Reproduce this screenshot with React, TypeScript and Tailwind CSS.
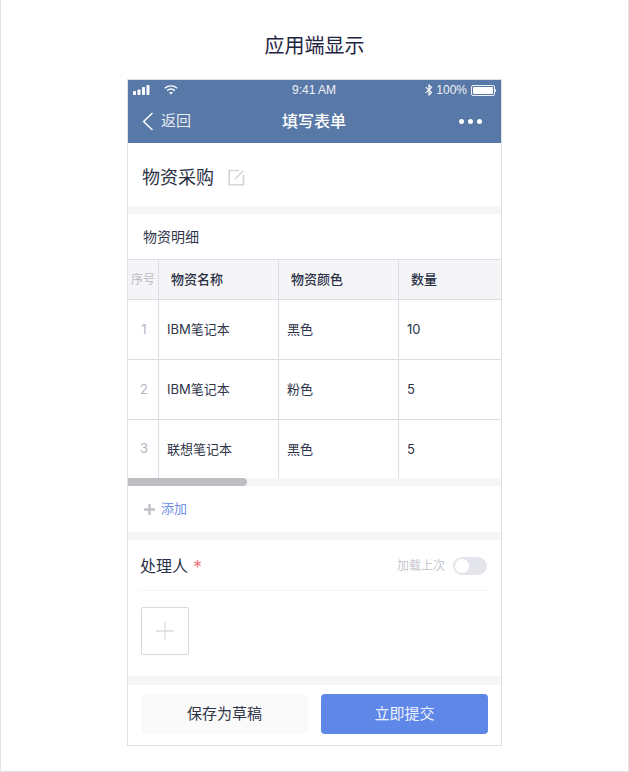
import React from "react";

const cn = "font-['Inter','Noto_Sans_CJK_SC',sans-serif]";

function StatusBar() {
  return (
    <div className="h-5 flex items-center justify-between pl-[5px] pr-[5px] text-[12px] text-white/90 relative font-['Liberation_Sans',sans-serif]">
      <div className="flex items-center gap-[13px]">
        <svg width="18" height="10" viewBox="0 0 18 10" fill="#fff">
          <rect x="0" y="6" width="3" height="4" rx="0.8" />
          <rect x="4.5" y="4.5" width="3" height="5.5" rx="0.8" />
          <rect x="9" y="2" width="3" height="8" rx="0.8" />
          <rect x="13.5" y="0" width="3" height="10" rx="0.8" />
        </svg>
        <svg width="14" height="10" viewBox="0 0 14 10" fill="none" stroke="#fff" strokeWidth="1.4">
          <path d="M0.8 3.3C4.5 0.2 9.5 0.2 13.2 3.3" />
          <path d="M3.2 5.6C5.4 3.7 8.6 3.7 10.8 5.6" />
          <path d="M7 9.6 5 7.6C6.2 6.7 7.8 6.7 9 7.6Z" fill="#fff" stroke="none" />
        </svg>
      </div>
      <span className="absolute left-[164px] top-0 leading-5">9:41 AM</span>
      <div className="flex items-center gap-[3px]">
        <svg width="8" height="12" viewBox="0 0 8 12" fill="none" stroke="#fff" strokeWidth="1.1">
          <path d="M0.8 3.2 6.6 8.4 4 11V1L6.6 3.6 0.8 8.8" />
        </svg>
        <span>100%</span>
        <div className="flex items-center ml-[1px]">
          <div className="w-[24px] h-[11px] rounded-[2px] border border-white/90 p-[1px]">
            <div className="w-full h-full bg-white rounded-[1px]" />
          </div>
          <div className="w-[1px] h-[3px] bg-white/70" />
        </div>
      </div>
    </div>
  );
}

function NavBar() {
  return (
    <div className="h-[43px] flex items-center justify-between relative pl-[14px] pr-[19px] pb-[1px]">
      <div className="flex items-center gap-[7px]">
        <svg width="12" height="19" viewBox="0 0 12 19" fill="none" stroke="#fff" strokeWidth="1.5">
          <path d="M10.5 1 1.6 9.5 10.5 18" />
        </svg>
        <span className="text-[15px] text-white/85">返回</span>
      </div>
      <span className="absolute left-0 right-[1px] text-center text-[16px] font-medium text-white pb-[1px]">填写表单</span>
      <div className="flex items-center gap-[4px]">
        <div className="w-[5px] h-[5px] rounded-full bg-white" />
        <div className="w-[5px] h-[5px] rounded-full bg-white" />
        <div className="w-[5px] h-[5px] rounded-full bg-white" />
      </div>
    </div>
  );
}

const rows = [
  ["1", "IBM笔记本", "黑色", "10"],
  ["2", "IBM笔记本", "粉色", "5"],
  ["3", "联想笔记本", "黑色", "5"],
];

function Table() {
  return (
    <div className="border-t border-[#dcdce4]">
      <div className="flex h-[40px] bg-[#f5f5f8] border-b border-[#dcdce4] items-stretch">
        <div className="w-[31px] flex items-center justify-center border-r border-[#dcdce4] text-[12px] text-[#b9bac4]">序号</div>
        <div className="w-[120px] flex items-center pl-[12px] border-r border-[#dcdce4] text-[13px] font-medium text-[#2a3045]">物资名称</div>
        <div className="w-[120px] flex items-center pl-[12px] border-r border-[#dcdce4] text-[13px] font-medium text-[#2a3045]">物资颜色</div>
        <div className="flex-1 flex items-center pl-[12px] text-[13px] font-medium text-[#2a3045]">数量</div>
      </div>
      {rows.map((r, i) => (
        <div key={r[0]} className={`flex items-stretch ${i < 2 ? "h-[60px] border-b border-[#dcdce4]" : "h-[58px]"}`}>
          <div className="w-[31px] flex items-center justify-center pl-[2px] border-r border-[#dcdce4] text-[13px] text-[#b4b5c0]">{r[0]}</div>
          <div className="w-[120px] flex items-center pl-[8px] pt-[1px] border-r border-[#dcdce4] text-[13px] text-[#2f3448]">{r[1]}</div>
          <div className="w-[120px] flex items-center pl-[8px] pt-[1px] border-r border-[#dcdce4] text-[13px] text-[#2f3448]">{r[2]}</div>
          <div className="flex-1 flex items-center pl-[8px] pt-[1px] text-[13px] text-[#2f3448]">{r[3]}</div>
        </div>
      ))}
      <div className="h-2 bg-[#f5f6f8]">
        <div className="w-[119px] h-full rounded-r-full bg-[#bdbec3]" />
      </div>
    </div>
  );
}

export default function App() {
  return (
    <div className={`w-[629px] h-[772px] bg-white border border-t-0 border-[#e2e2e2] flex flex-col items-center ${cn}`}>
      <div className="h-[79px] flex items-center justify-center text-[20px] text-[#1f2540] pt-[12px]">应用端显示</div>
      <div className="w-[375px] h-[667px] border border-[#dfe0e3] flex flex-col bg-white">
        <div className="bg-[#5878a7]">
          <StatusBar />
          <NavBar />
        </div>
        <div className="h-[71px] flex items-center pl-[14px] pt-[6px] gap-[14px] border-b-[8px] border-[#f5f6f8]">
          <span className="text-[18px] text-[#2a3045]">物资采购</span>
          <svg width="17" height="17" viewBox="0 0 17 17" fill="none" stroke="#d5d5d8" strokeWidth="1.6">
            <path d="M11 1.5H1.2V15.8H15.5V6" />
            <path d="M7 10 15 2" />
          </svg>
        </div>
        <div className="h-[45px] flex items-center pl-[15px] text-[14px] text-[#2f3448]">物资明细</div>
        <Table />
        <div className="h-[46px] flex items-center pl-[16px] gap-[6px] text-[13px] text-[#6d8ee8]">
          <svg width="11" height="11" viewBox="0 0 11 11" stroke="#c0c1c8" strokeWidth="2.4">
            <path d="M5.5 0V11M0 5.5H11" />
          </svg>
          <span>添加</span>
        </div>
        <div className="h-2 bg-[#f5f6f8]" />
        <div className="flex-1 pl-[12px] pr-[14px]">
          <div className="h-[51px] flex items-center justify-between border-b border-[#f4f4f6] pt-[2px]">
            <div className="flex items-center gap-[5px]">
              <span className="text-[16px] text-[#2a3045]">处理人</span>
              <span className="text-[18px] text-[#ee7b86] leading-none pt-[3px]">*</span>
            </div>
            <div className="flex items-center gap-[8px]">
              <span className="text-[12px] text-[#c6c7cf]">加载上次</span>
              <div className="w-[34px] h-[18px] rounded-full bg-[#e4e5ea] p-[2px]">
                <div className="w-[14px] h-[14px] rounded-full bg-white" />
              </div>
            </div>
          </div>
          <div className="mt-[16px] ml-[1px] w-[48px] h-[48px] rounded-[2px] border border-[#d8d8e0] flex items-center justify-center">
            <svg width="18" height="18" viewBox="0 0 18 18" stroke="#dcdde2" strokeWidth="1.3">
              <path d="M9 0V18M0 9H18" />
            </svg>
          </div>
        </div>
        <div className="h-[9px] bg-[#f5f6f8]" />
        <div className="h-[60px] flex items-start pt-[9px] pl-[13px] pr-[13px] gap-[13px]">
          <div className="w-[167px] h-[40px] rounded-[4px] bg-[#fafafa] flex items-center justify-center text-[15px] text-[#2f3448]">保存为草稿</div>
          <div className="w-[167px] h-[40px] rounded-[4px] bg-[#5f87e8] flex items-center justify-center text-[15px] text-white/90">立即提交</div>
        </div>
      </div>
    </div>
  );
}
